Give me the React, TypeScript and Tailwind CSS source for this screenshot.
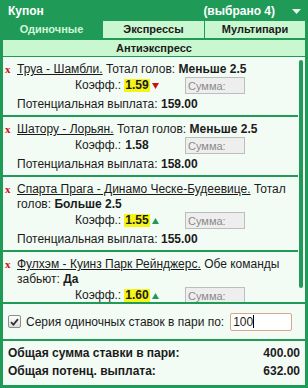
import React from 'react';

type Bet = {
  id: number;
  event: string;
  market: string;
  pick: string;
  coef: string;
  trend?: 'up' | 'down';
  payout: string;
};

const bets: Bet[] = [
  { id: 1, event: 'Труа - Шамбли.', market: 'Тотал голов:', pick: 'Меньше 2.5', coef: '1.59', trend: 'down', payout: '159.00' },
  { id: 2, event: 'Шатору - Лорьян.', market: 'Тотал голов:', pick: 'Меньше 2.5', coef: '1.58', payout: '158.00' },
  { id: 3, event: 'Спарта Прага - Динамо Ческе-Будеевице.', market: 'Тотал голов:', pick: 'Больше 2.5', coef: '1.55', trend: 'up', payout: '155.00' },
  { id: 4, event: 'Фулхэм - Куинз Парк Рейнджерс.', market: 'Обе команды забьют:', pick: 'Да', coef: '1.60', trend: 'up', payout: '160.00' },
];

const BetRow = ({ bet }: { bet: Bet }) => (
  <div className="flex border-b-2 border-[#1f9b57] pt-[5px] pb-[3px]">
    <span className="w-[14px] shrink-0 pl-[2px] font-['Liberation_Serif',serif] font-bold text-[11px] text-[#cc1111] leading-[15px]">
      x
    </span>
    <div className="flex-1 leading-[15px]">
      <div>
        <span className="underline cursor-pointer">{bet.event}</span> {bet.market} <b>{bet.pick}</b>
      </div>
      <div className="flex items-center h-[17px] mb-[3px]">
        <div className="w-[168px] pl-[58px] flex items-center">
          <span>Коэфф.:</span>
          <b className={`ml-[3px] px-[1px] leading-[13px] ${bet.trend ? 'bg-[#f4f416]' : ''}`}>{bet.coef}</b>
          {bet.trend === 'down' && (
            <svg width="7" height="6" viewBox="0 0 7 6" className="ml-[2px] mt-[1px]">
              <polygon points="0,0 7,0 3.5,6" fill="#d01010" />
            </svg>
          )}
          {bet.trend === 'up' && (
            <svg width="7" height="6" viewBox="0 0 7 6" className="ml-[2px]">
              <polygon points="0,6 7,6 3.5,0" fill="#1f9b57" />
            </svg>
          )}
        </div>
        <input
          placeholder="Сумма:"
          className="w-[60px] h-[17px] border border-[#bdbdbd] bg-[#eeeeee] px-[2px] text-[11px] placeholder:text-[#8a8a8a] outline-none"
        />
      </div>
      <div>
        Потенциальная выплата: <b>{bet.payout}</b>
      </div>
    </div>
  </div>
);

const Tab = ({ label, active, className }: { label: string; active?: boolean; className: string }) => (
  <div
    className={`${className} flex items-center justify-center font-bold text-[11px] ${
      active ? 'text-[#d3f5d9]' : 'bg-[#c9f7cf] text-[#1b1b1b]'
    }`}
  >
    {label}
  </div>
);

export default function App() {
  return (
    <div className="w-[308px] h-[388px] bg-[#1f9b57] flex flex-col overflow-hidden font-['Liberation_Sans',Arial,sans-serif] text-[12px] text-[#1b1b1b]">
      <div className="h-[21px] shrink-0 flex items-center pl-[8px] pr-[7px] text-white font-bold text-[12px]">
        <span>Купон</span>
        <span className="ml-auto">(выбрано 4)</span>
        <svg width="9" height="5" viewBox="0 0 9 5" className="ml-[17px] mt-[2px]">
          <polygon points="0,0 9,0 4.5,5" fill="#e8f7ec" />
        </svg>
      </div>

      <div className="h-[17px] shrink-0 flex mr-[3px]">
        <Tab label="Одиночные" active className="w-[103px]" />
        <Tab label="Экспрессы" className="w-[101px]" />
        <Tab label="Мультипари" className="flex-1 ml-[1px]" />
      </div>

      <div className="h-[16px] shrink-0 mt-[2px] mb-[1px] mx-[3px] bg-[#c9f7cf] flex items-center justify-center font-bold text-[11px]">
        Антиэкспресс
      </div>

      <div className="h-[245px] shrink-0 mx-[3px] bg-[#f3fbf5] flex">
        <div className="flex-1 overflow-hidden">
          {bets.map((bet) => (
            <BetRow key={bet.id} bet={bet} />
          ))}
        </div>
        <div className="w-[7px] shrink-0 pt-[3px] pl-[1px]">
          <div className="w-[4px] h-[228px] rounded-full bg-[#1f9b57]" />
        </div>
      </div>

      <div className="h-[35px] shrink-0 mt-[2px] mx-[3px] bg-[#f3fbf5] flex items-center pl-[5px]">
        <div className="w-[13px] h-[13px] rounded-[2px] border border-[#8c8c8c] bg-gradient-to-b from-white to-[#dcdcdc] flex items-center justify-center">
          <svg width="9" height="8" viewBox="0 0 9 8">
            <path d="M1 4.2 L3.4 6.6 L8 1.2" stroke="#333" strokeWidth="1.8" fill="none" />
          </svg>
        </div>
        <span className="ml-[5px]">Серия одиночных ставок в пари по:</span>
        <div className="ml-[6px] w-[62px] h-[18px] border border-[#d9a785] rounded-[2px] bg-white flex items-center pl-[2px]">
          <span>100</span>
          <span className="w-px h-[13px] bg-black" />
        </div>
      </div>

      <div className="h-[44px] shrink-0 mt-[2px] mx-[3px] bg-[#f3fbf5] pt-[3px] px-[5px] font-bold">
        <div className="h-[18px] flex items-center justify-between">
          <span>Общая сумма ставки в пари:</span>
          <span>400.00</span>
        </div>
        <div className="h-[18px] flex items-center justify-between">
          <span>Общая потенц. выплата:</span>
          <span>632.00</span>
        </div>
      </div>
    </div>
  );
}
